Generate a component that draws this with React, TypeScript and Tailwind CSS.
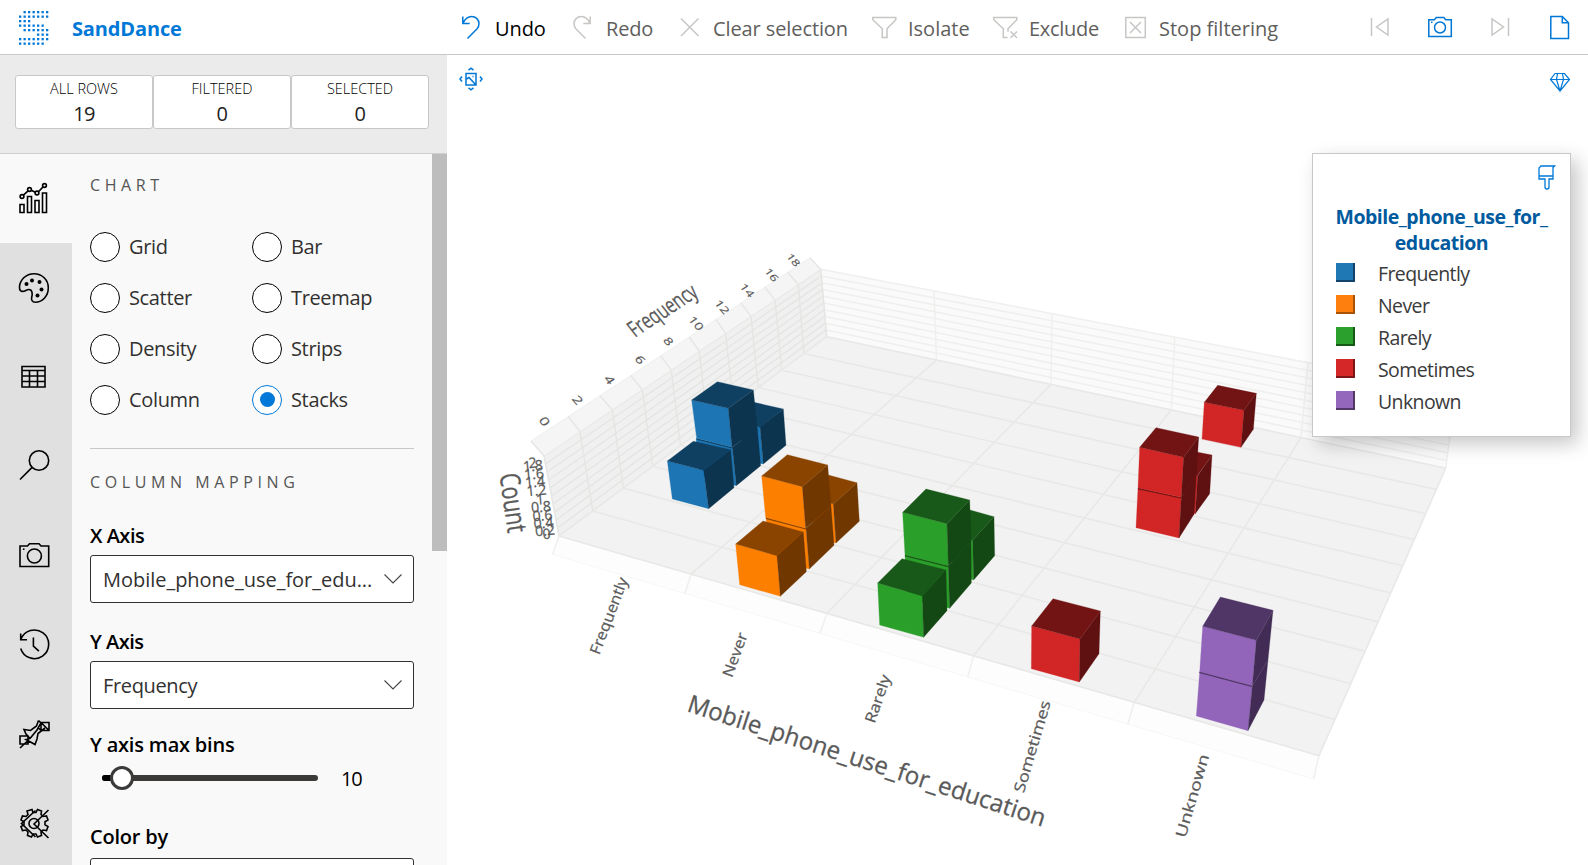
import React from "react";

type Pt = [number, number];
type Quad = [Pt, Pt, Pt, Pt];

const UI = "font-['Open_Sans','Noto_Sans',sans-serif]";

function atX([ax, ay]: Pt, [bx, by]: Pt, x: number): Pt {
  return [x, ay + ((x - ax) / (bx - ax)) * (by - ay)];
}
function mix([ax, ay]: Pt, [bx, by]: Pt, t: number): Pt {
  return [ax + (bx - ax) * t, ay + (by - ay) * t];
}

/* Quad corners run 00, 10, 11, 01. Columns join edge 00-10 to edge 01-11 by x position. */
function Grid({ quad, near, far, left, right, steps = 0, fill, stroke, width = 1.5, edge }: {
  quad: Quad; near: number[]; far: number[]; left?: number[]; right?: number[]; steps?: number;
  fill: string; stroke: string; width?: number; edge?: string;
}) {
  const [p00, p10, p11, p01] = quad;
  const lines: [Pt, Pt][] = near.map((x, i) => [atX(p00, p10, x), atX(p01, p11, far[i])]);
  if (left && right) left.forEach((x, i) => lines.push([atX(p00, p01, x), atX(p10, p11, right[i])]));
  for (let j = 0; j <= steps && steps > 0; j++) lines.push([mix(p00, p01, j / steps), mix(p10, p11, j / steps)]);
  return (
    <g>
      <polygon points={quad.map((p) => p.join(",")).join(" ")} fill={fill} stroke={edge} strokeWidth={0.7} />
      {lines.map(([s, t], i) => (
        <line key={i} x1={s[0]} y1={s[1]} x2={t[0]} y2={t[1]} stroke={stroke} strokeWidth={width} />
      ))}
    </g>
  );
}

const frontX = [559, 691, 826.7, 973.5, 1134.3, 1319];
const stripX = [552.5, 685, 820, 967.7, 1127.7, 1313.6];
const backX = [826.7, 936.5, 1051, 1171.3, 1301, 1445.7];
const backTopX = [820.7, 934, 1052, 1174.7, 1308, 1456];
const leftX = [559, 592.7, 623.3, 652.7, 680.5, 707.5, 733.5, 758.3, 781.7, 803.9, 826.7];
const rightX = [1319, 1335, 1350.7, 1365, 1378, 1390.7, 1402.7, 1414.3, 1425.7, 1436.4, 1445.7];
const leftTopX = [544, 580, 612.3, 642.3, 671.3, 699.3, 725.7, 751, 775, 798.3, 820.7];
const leftOuterX = [531, 568.3, 600, 630.7, 660.7, 689.3, 716, 741, 765, 787.7, 810];

interface Palette { front: string; top: string; side: string }
const palettes: Record<string, Palette> = {
  blue: { front: "#1d75b3", top: "#0f4062", side: "#0c344f" },
  orange: { front: "#fd7f00", top: "#8a4400", side: "#703700" },
  green: { front: "#2a9f2a", top: "#185818", side: "#134713" },
  red: { front: "#d22626", top: "#731414", side: "#5f1010" },
  purple: { front: "#9265ba", top: "#503666", side: "#422c55" },
};

interface Block { c: string; top?: string; front: string; side: string; seam?: string }

/* Blocks are listed back to front, in thirds of a pixel from their group's origin. */
const leftBlocks: Block[] = [
  { c: "blue", top: "342,127 430,147 360,202 300,185", front: "300,185 360,200 370,312 310,300", side: "360,200 430,147 438,256 370,312" },
  { c: "blue", front: "168,235 277,262 289,377 180,350", side: "277,262 352,205 362,317 289,377" },
  { c: "blue", top: "232,65 340,90 265,145 155,120", front: "155,120 265,145 276,262 170,235", side: "265,145 340,90 352,207 276,262", seam: "170,237 277,264" },
  { c: "blue", top: "160,244 272,269 191,331 82,303", front: "82,303 191,331 206,446 97,417", side: "191,331 272,269 282,383 206,446" },
  { c: "orange", top: "565,345 651,368 580,432 510,415", front: "510,415 580,432 588,549 530,540", side: "580,432 651,368 658,484 588,549" },
  { c: "orange", front: "378,473 498,505 508,627 390,600", side: "498,505 573,438 582,556 508,627" },
  { c: "orange", top: "442,284 563,315 487,380 365,348", front: "365,348 487,380 497,505 377,473", side: "487,380 563,315 573,438 497,505", seam: "378,475 498,507" },
  { c: "orange", top: "369,483 490,516 411,587 287,552", front: "287,552 411,587 421,709 299,674", side: "411,587 490,516 499,635 421,709" },
  { c: "green", top: "990,450 1062,470 998,541 930,520", front: "930,520 998,541 1001,660 940,640", side: "998,541 1062,470 1064,587 1001,660" },
  { c: "green", front: "795,585 925,618 929,745 800,715", side: "925,618 993,545 994,669 929,745" },
  { c: "green", top: "858,387 989,420 921,491 788,457", front: "788,457 921,491 925,618 795,585", side: "921,491 989,420 993,545 925,618", seam: "795,587 926,620" },
  { c: "green", top: "786,596 918,630 847,708 713,669", front: "713,669 847,708 851,832 719,795", side: "847,708 918,630 921,752 851,832" },
];
const rightBlocks: Block[] = [
  { c: "red", top: "653,76 769,100 732,151 613,127", front: "613,127 732,151 723,262 606,237", side: "732,151 769,100 760,208 723,262" },
  { c: "red", top: "590,276 636,285 592,347 550,340", front: "550,340 593,347 586,461 550,455", side: "593,347 636,285 629,401 586,461" },
  { c: "red", front: "414,384 544,412 537,534 408,503", side: "544,412 589,345 582,463 537,534" },
  { c: "red", top: "468,203 596,231 551,292 419,262", front: "419,262 551,292 544,412 414,384", side: "551,292 596,231 589,345 544,412", seam: "414,386 543,414" },
  { c: "red", top: "159,716 301,753 240,837 95,798", front: "95,798 240,837 238,966 94,926", side: "240,837 301,753 297,881 238,966" },
  { c: "purple", front: "599,936 757,978 744,1112 589,1068", side: "757,978 804,900 792,1020 744,1112" },
  { c: "purple", top: "661,711 819,751 769,841 608,799", front: "608,799 769,841 757,978 599,936", side: "769,841 819,751 804,900 757,978", seam: "598,937 756,979" },
];

function Blocks({ items }: { items: Block[] }) {
  return (
    <>
      {items.map((b, i) => {
        const p = palettes[b.c];
        return (
          <g key={i} strokeWidth={0.8} strokeLinejoin="round">
            <polygon points={b.front} fill={p.front} stroke={p.front} />
            <polygon points={b.side} fill={p.side} stroke={p.side} />
            {b.top && <polygon points={b.top} fill={p.top} stroke={p.top} />}
            {b.seam && <polyline points={b.seam} fill="none" stroke={p.top} strokeWidth={3.5} />}
          </g>
        );
      })}
    </>
  );
}

const freqTicks: [string, number, number][] = [
  ["0", 544, 421.7], ["2", 577.3, 400.3], ["4", 609.3, 380], ["6", 640, 360], ["8", 668.3, 341.3],
  ["10", 696, 323.3], ["12", 722, 307], ["14", 747.3, 290.3], ["16", 771.7, 274.7], ["18", 793.7, 259.7],
];
const countTicks: [string, number, number][] = [
  ["2", 532.5, 463], ["1.8", 533, 466], ["1.6", 534, 474], ["1.4", 535, 482], ["1.2", 536.5, 490.5], ["1", 540, 499.5],
  ["0.8", 541, 507], ["0.6", 542.5, 515.5], ["0.4", 543.5, 523], ["0.2", 545, 530.5], ["0", 546.5, 534],
];
const categoryTicks: [string, number, number, number, number][] = [
  ["Frequently", 609.5, 616, -69, 81], ["Never", 735.7, 655, -70, 46], ["Rarely", 878.5, 699, -71, 50],
  ["Sometimes", 1033, 746.7, -73.5, 95], ["Unknown", 1193, 796, -74, 86],
];

function Scene() {
  return (
    <svg className="block h-[810px] w-[1141px]" viewBox="447 55 1141 810" fontFamily="'Open Sans','Noto Sans',sans-serif">
      <Grid quad={[[826.7, 336.7], [1445.7, 468.3], [1456, 391], [820.7, 269.3]]} near={backX} far={backTopX} steps={10} fill="#fafafa" stroke="#efefee" />
      <Grid quad={[[559, 536], [826.7, 336.7], [820.7, 269.3], [544, 456]]} near={leftX} far={leftTopX} steps={10} fill="#f0f0f0" stroke="#e5e5e3" />
      <Grid quad={[[531, 441], [810, 257.7], [820.7, 269.3], [544, 456]]} near={leftOuterX} far={leftTopX} fill="#f5f5f5" stroke="#e6e6e4" edge="#e9e9e7" />
      <Grid quad={[[559, 536], [1319, 755.7], [1313.6, 779], [552.5, 554.5]]} near={frontX} far={stripX} fill="#fdfdfd" stroke="#efefee" edge="#f3f3f2" />
      <Grid quad={[[559, 536], [1319, 755.7], [1445.7, 468.3], [826.7, 336.7]]} near={frontX} far={backX} left={leftX} right={rightX} fill="#f2f2f2" stroke="#e8e8e7" width={1.6} />

      <g transform="translate(640 360) scale(0.33333)"><Blocks items={leftBlocks} /></g>
      <g transform="translate(1000 360) scale(0.33333)"><Blocks items={rightBlocks} /></g>

      <g fill="#5a5a5a" stroke="#5a5a5a" strokeWidth={0.25} textAnchor="middle">
        {freqTicks.map(([t, x, y], i) => (
          <text key={t} transform={`matrix(0.655 0.756 -0.62 0.41 ${x} ${y})`} fontSize={16 - i * 0.35} y={5}>{t}</text>
        ))}
        {countTicks.map(([t, x, y]) => (
          <text key={t} transform={`translate(${x} ${y}) rotate(-5)`} fontSize={14.5} y={5}
            textLength={t.length > 1 ? 20 : 8} lengthAdjust="spacingAndGlyphs">{t}</text>
        ))}
        {categoryTicks.map(([t, x, y, r, len]) => (
          <text key={t} transform={`translate(${x} ${y}) rotate(${r})`} fontSize={15} y={4.5}
            textLength={len} lengthAdjust="spacingAndGlyphs">{t}</text>
        ))}
        <text transform="matrix(0.84 -0.55 0.62 0.78 663 311)" fontSize={23} y={7} textLength={77} lengthAdjust="spacingAndGlyphs">Frequency</text>
        <text transform="translate(511.5 503) rotate(82)" fontSize={28} y={8} textLength={60} lengthAdjust="spacingAndGlyphs">Count</text>
      </g>
      <text transform="translate(686 711) rotate(18)" fill="#5a5a5a" stroke="#5a5a5a" strokeWidth={0.3} fontSize={24.5} textLength={375} lengthAdjust="spacingAndGlyphs">
        Mobile_phone_use_for_education
      </text>
    </svg>
  );
}

const LOGO = [".######", "#######", "###....", "######.", ".######", "....###", "#######", "######."];

function Logo() {
  return (
    <svg className="h-[34px] w-[30px]" viewBox="0 0 30 34" fill="#0078d7">
      {LOGO.flatMap((row, y) =>
        [...row].map((ch, x) => ch === "#" && <rect key={`${x}-${y}`} x={x * 4.5} y={y * 4.5} width={2.3} height={2.3} />)
      )}
    </svg>
  );
}

function Svg({ w, h, children, color = "#c8c6c4", sw = 1.5 }: {
  w: number; h: number; children: React.ReactNode; color?: string; sw?: number;
}) {
  return (
    <svg width={w} height={h} viewBox={`0 0 ${w} ${h}`} fill="none" stroke={color} strokeWidth={sw} className="shrink-0">
      {children}
    </svg>
  );
}

const BLUE = "#0078d7";
const undoIcon = <Svg w={26} h={26} color={BLUE}><path d="M3.8 2.5v6.9h6.9M4 9.2C6.500 4 10 2.500 12.500 2.500c4.500 0 7.500 3.200 7.500 7.300 0 2-.8 3.800-2.100 5.200L8.500 24.500" /></Svg>;
const redoIcon = <Svg w={26} h={26}><path d="M20.200 2.500v6.900h-6.900M20 9.200C17.500 4 14 2.500 11.500 2.500 7 2.500 4 5.700 4 9.800c0 2 .8 3.800 2.100 5.200l9.400 9.500" /></Svg>;
const clearIcon = <Svg w={26} h={26}><path d="M3 4.500l17.500 17.500M20.500 4.500L3 22" /></Svg>;
const funnelIcon = <Svg w={28} h={26}><path d="M1.800 3.500h23v2.200l-8.800 9v8.800h-4.700v-8.800l-9.500-9z" /></Svg>;
const excludeIcon = <Svg w={28} h={26}><path d="M15.500 23.500h-4.200v-8.800l-9.500-9V3.500h23v2.200l-8.800 9v3M18.500 17.500l6.500 6.300M25 17.500l-6.500 6.300" /></Svg>;
const stopIcon = <Svg w={26} h={26}><path d="M2.800 3.500h19.500v20H2.800zM7 8l11 11M18 8L7 19" /></Svg>;

const commands: { label: string; icon: React.ReactNode; cls: string }[] = [
  { label: "Undo", icon: undoIcon, cls: "w-[111px] gap-2.5 text-black tracking-[-0.1px]" },
  { label: "Redo", icon: redoIcon, cls: "w-[108px] gap-2.5 text-[#605e5c] tracking-[-0.2px]" },
  { label: "Clear selection", icon: clearIcon, cls: "w-[193px] gap-[9px] text-[#605e5c] tracking-[-0.1px]" },
  { label: "Isolate", icon: funnelIcon, cls: "w-[121px] gap-[9px] text-[#605e5c] tracking-[0px]" },
  { label: "Exclude", icon: excludeIcon, cls: "w-[131px] gap-[9px] text-[#605e5c] tracking-[-0.3px]" },
  { label: "Stop filtering", icon: stopIcon, cls: "w-[160px] gap-2.5 text-[#605e5c] tracking-[0px]" },
];

function Header() {
  return (
    <header className="flex h-[55px] shrink-0 items-center border-b border-[#c8c8c8] bg-white">
      <div className="flex w-[459px] items-center pl-[19px]">
        <div className="pt-[2px]"><Logo /></div>
        <h1 className="ml-[23px] pt-[3px] text-[20px] font-bold tracking-[-0.15px] text-[#0078d7]">SandDance</h1>
      </div>
      <nav className="flex items-center text-[20px]">
        {commands.map((c) => (
          <button key={c.label} className={`flex items-center whitespace-nowrap ${c.cls}`}>
            {c.icon}
            <span className="pt-1">{c.label}</span>
          </button>
        ))}
      </nav>
      <div className="ml-auto flex items-center pr-[17px]">
        <Svg w={20} h={26}><path d="M1.500 4v18M18 5v16L6.500 13z" /></Svg>
        <span className="w-[37px]" />
        <Svg w={26} h={26} color={BLUE}>
          <path d="M1.800 5.700h5.700l1.700-2.200h7.700l1.700 2.200h5.700v16.800H1.800z" /><circle cx="13" cy="13.500" r="5.500" /><path d="M4 8.300h1.500" />
        </Svg>
        <span className="w-[37px]" />
        <Svg w={20} h={26}><path d="M18.500 4v18M2 5v16l11.500-8z" /></Svg>
        <span className="w-[39px]" />
        <Svg w={22} h={26} color={BLUE}><path d="M1.800 2.500h11.500l6.200 6.200v15.800H1.800zM13.300 2.500v6.200h6.200" /></Svg>
      </div>
    </header>
  );
}

function Stat({ label, value }: { label: string; value: number }) {
  return (
    <div className="flex h-[54px] w-[138px] flex-col items-center rounded-[3px] border border-[#c8c8c8] bg-white">
      <span className="mt-[3px] text-[14.5px] leading-[20px] font-light tracking-[0px] text-black">{label}</span>
      <span className="mt-[2px] text-[20px] leading-[26px] text-[#222] tracking-[-0.6px]">{value}</span>
    </div>
  );
}

const tabIcons: React.ReactNode[] = [
  <>
    <path d="M2 23.500h4v8H2zM9.500 15.500h4v16h-4zM17 19.500h4v12h-4zM24.500 12h4v19.500h-4z" />
    <circle cx="4" cy="15.500" r="1.900" /><circle cx="11.500" cy="8.500" r="1.900" /><circle cx="19" cy="12" r="1.900" /><circle cx="26.500" cy="4.500" r="1.900" />
    <path d="M5.400 14.200l4.700-4.300M13.200 9.300l4.100 1.900M20.400 10.700l4.700-4.800" />
  </>,
  <>
    <path d="M16 2.700c8 0 14.300 6 14.300 14 0 8.200-5.600 14.500-13 14.500-3.200 0-4.300-2.500-3.600-5 .8-2.800 1-7.700-2.900-7.700-2.300 0-3.700 1.900-6 1.900-2 0-3.300-1.500-3.300-3.900C1.500 8.800 8 2.700 16 2.700z" />
    <g fill="#000" stroke="none"><circle cx="8.500" cy="13" r="2" /><circle cx="14" cy="9.500" r="2" /><circle cx="21.500" cy="11" r="2" /><circle cx="23.500" cy="18.500" r="2" /><circle cx="19.500" cy="24.500" r="2" /></g>
  </>,
  <path d="M4 6.500h23v20.500h-23zM4 10.500h23M4 16h23M4 21.500h23M11.500 10.500v16.500M19.500 10.500v16.500" />,
  <><circle cx="21" cy="11.500" r="9.700" /><path d="M14.100 18.400L2 30.500" /></>,
  <><path d="M2 7h7.500l2-2.200h9.500l2 2.200h7.700v20.500H2z" /><circle cx="16.400" cy="17" r="7" /><path d="M4.900 10.200h1.600" /></>,
  <><path d="M2.700 5.500v6.300h6.300M2.900 11.500A14.300 14.300 0 1 1 2.700 20.500M15.400 9.500v8.700l5.500 5" /></>,
  <>
    <path d="M23 4.500h8v8h-8zM2 18h8v8H2zM2 30L10.500 22M23 4.500l8 8M20.500 2.500l2.500 2.500-4 7-7 8.500M20.500 2.500L18.500 8l-6 4.500-6.500-1 2 4.500 4 4.500M12 20.500l-4 1 9 5 2-5.500 1-5.500 7-5.500M23 12.500l-3-3" />
  </>,
  <>
    <path d="M14 2.500l1 3h3l1.500-3 4 1.500-.5 3.500 2 2 3.500-.5 1.500 4-3 1.800v3l3 1.700-1.500 4-3.500-.5-2 2 .5 3.500-4 1.500-1.500-3h-3l-1.500 3-4-1.500.5-3.500-2-2-3.500.5-1.500-4 3-1.700v-3l-3-1.800 1.500-4 3.500.5 2-2L9 4z" />
    <circle cx="16" cy="16.500" r="5" /><path d="M30.500 3L16 17l14.500 14M17.500 3.500L3.500 16.500l14 13.500" />
  </>,
];

function Tabs() {
  return (
    <div className="flex w-[72px] shrink-0 flex-col bg-[#e0e0e0]">
      {tabIcons.map((icon, i) => (
        <button key={i} className={`flex h-[89.4px] shrink-0 items-center justify-start pb-[2px] pl-[18px] ${i === 0 ? "bg-[#f9f9f9]" : ""}`}>
          <Svg w={33} h={33} color="#000" sw={1.6}>{icon}</Svg>
        </button>
      ))}
    </div>
  );
}

function Radio({ label, on = false }: { label: string; on?: boolean }) {
  return (
    <label className="flex h-[51px] w-[162px] items-center gap-[9px]">
      <span className={`flex size-[30px] items-center justify-center rounded-full border bg-white ${on ? "border-[#0078d7]" : "border-black"}`}>
        {on && <span className="size-[15px] rounded-full bg-[#0078d7]" />}
      </span>
      <span className="pt-px text-[20px] leading-[30px] tracking-[-0.35px] text-[#323130]">{label}</span>
    </label>
  );
}

function Select({ value = "", tight = true }: { value?: string; tight?: boolean }) {
  return (
    <div className="flex h-[48px] w-[324px] shrink-0 items-center justify-between rounded-[3px] border border-[#323130] bg-white pr-[11px] pl-[12px]">
      <span className={`pt-[2px] text-[20px] whitespace-nowrap text-[#323130] ${tight ? "tracking-[-0.35px]" : "tracking-[-0.03px]"}`}>{value}</span>
      <svg width="18" height="10" viewBox="0 0 18 10" fill="none" stroke="#444" strokeWidth="1.1"><path d="M.5.5L9 9 17.500.5" /></svg>
    </div>
  );
}

const heading = "h-[24px] text-[16px] leading-[24px] font-medium tracking-[4.6px] text-[#555]";
const fieldLabel = "h-[28px] text-[20px] leading-[28px] font-semibold text-black";

function Sidebar() {
  return (
    <aside className="flex w-[447px] shrink-0 flex-col bg-[#ebebeb]">
      <div className="flex h-[99px] shrink-0 border-b border-[#d0d0d0] pt-5 pl-[15px]">
        <Stat label="ALL ROWS" value={19} />
        <Stat label="FILTERED" value={0} />
        <Stat label="SELECTED" value={0} />
      </div>
      <div className="flex min-h-0 flex-1 overflow-hidden">
        <Tabs />
        <div className="flex w-[360px] flex-col bg-[#f9f9f9] pl-[18px]">
          <h2 className={`mt-[19px] ${heading}`}>CHART</h2>
          <div className="mt-[24px] grid w-[324px] grid-cols-2">
            <Radio label="Grid" /><Radio label="Bar" />
            <Radio label="Scatter" /><Radio label="Treemap" />
            <Radio label="Density" /><Radio label="Strips" />
            <Radio label="Column" /><Radio label="Stacks" on />
          </div>
          <hr className="mt-[23px] w-[324px] border-t border-[#c8c8c8]" />
          <h2 className={`mt-[21px] ${heading}`}>COLUMN MAPPING</h2>
          <h3 className={`mt-[28px] tracking-[-0.5px] ${fieldLabel}`}>X Axis</h3>
          <div className="mt-[5px]"><Select value="Mobile_phone_use_for_edu..." tight={false} /></div>
          <h3 className={`mt-[25px] tracking-[-0.5px] ${fieldLabel}`}>Y Axis</h3>
          <div className="mt-[5px]"><Select value="Frequency" /></div>
          <h3 className={`mt-[22px] tracking-[-0.2px] ${fieldLabel}`}>Y axis max bins</h3>
          <div className="mt-[5px] flex h-[28px] items-center pl-3">
            <div className="flex h-[6px] w-[216px] items-center rounded-full bg-[#3b3a39]">
              <span className="h-[6px] w-[8px] rounded-l-full bg-black" />
              <span className="size-6 rounded-full border-[3px] border-[#3b3a39] bg-white" />
            </div>
            <span className="ml-[23px] pt-px text-[20px] font-medium tracking-[-1.3px] text-black">10</span>
          </div>
          <h3 className={`mt-[31px] tracking-[-0.2px] ${fieldLabel}`}>Color by</h3>
          <div className="mt-[7px]"><Select /></div>
        </div>
        <div className="w-[15px] bg-[#f9f9f9]"><div className="h-[397px] bg-[#bdbdbd]" /></div>
      </div>
    </aside>
  );
}

const legendItems: [string, string][] = [
  ["Frequently", "border-[#124268] bg-[#1f77b4]"],
  ["Never", "border-[#a85408] bg-[#ff7f0e]"],
  ["Rarely", "border-[#175817] bg-[#2ca02c]"],
  ["Sometimes", "border-[#7d1616] bg-[#d62728]"],
  ["Unknown", "border-[#523968] bg-[#9467bd]"],
];

function Legend() {
  return (
    <section className="absolute top-[98px] right-[17px] h-[284px] w-[259px] border border-[#c8c8c8] bg-white shadow-[7px_7px_18px_rgba(0,0,0,0.22)]">
      <div className="flex h-[50px] justify-end pt-[11px] pr-[14px]">
        <Svg w={18} h={26} color={BLUE} sw={1.3}>
          <path d="M3 1h13.500L15 2.500V14h-4v8a2 2 0 0 1-4 0v-8H1V3zM1 11h14" />
        </Svg>
      </div>
      <h2 className="text-center text-[19.5px] leading-[26px] font-bold text-[#005a9e] tracking-[-0.5px]">
        Mobile_phone_use_for_<br />education
      </h2>
      <ul className="pt-px pl-[23px]">
        {legendItems.map(([label, cls]) => (
          <li key={label} className="flex h-8 items-center">
            <span className={`mb-[1px] size-[19px] border-r-2 border-b-2 ${cls}`} />
            <span className="ml-[23px] pt-[2px] text-[19.5px] leading-[26px] tracking-[-0.6px] text-[#3a3a3a]">{label}</span>
          </li>
        ))}
      </ul>
    </section>
  );
}

function Stage() {
  return (
    <main className="relative h-[810px] flex-1 overflow-hidden bg-white">
      <Scene />
      <button className="absolute top-[11px] left-[11px]">
        <Svg w={26} h={26} color={BLUE}>
          <path d="M8 7.500h10v11.500H8zM8.500 13l2.500-1.500 6.500 7M14.500 10.500h1M10.500 4.200l2.500-2 2.500 2M10.500 21.800l2.500 2 2.500-2M4 10.500L2 13l2 2.500M22 10.500l2 2.500-2 2.500" />
        </Svg>
      </button>
      <button className="absolute top-[17px] right-[17px]">
        <Svg w={22} h={21} color={BLUE} sw={1.2}>
          <path d="M6 1.500h9.500l5 6L11 19 1.500 7.500zM1.500 7.500h19M8.500 1.500L7.500 7.500l3.500 11.500L14.500 7.500l-1-6" />
        </Svg>
      </button>
      <Legend />
    </main>
  );
}

export default function App() {
  return (
    <div className={`flex h-[865px] w-[1588px] flex-col overflow-hidden bg-white ${UI}`}>
      <Header />
      <div className="flex h-[810px]">
        <Sidebar />
        <Stage />
      </div>
    </div>
  );
}
